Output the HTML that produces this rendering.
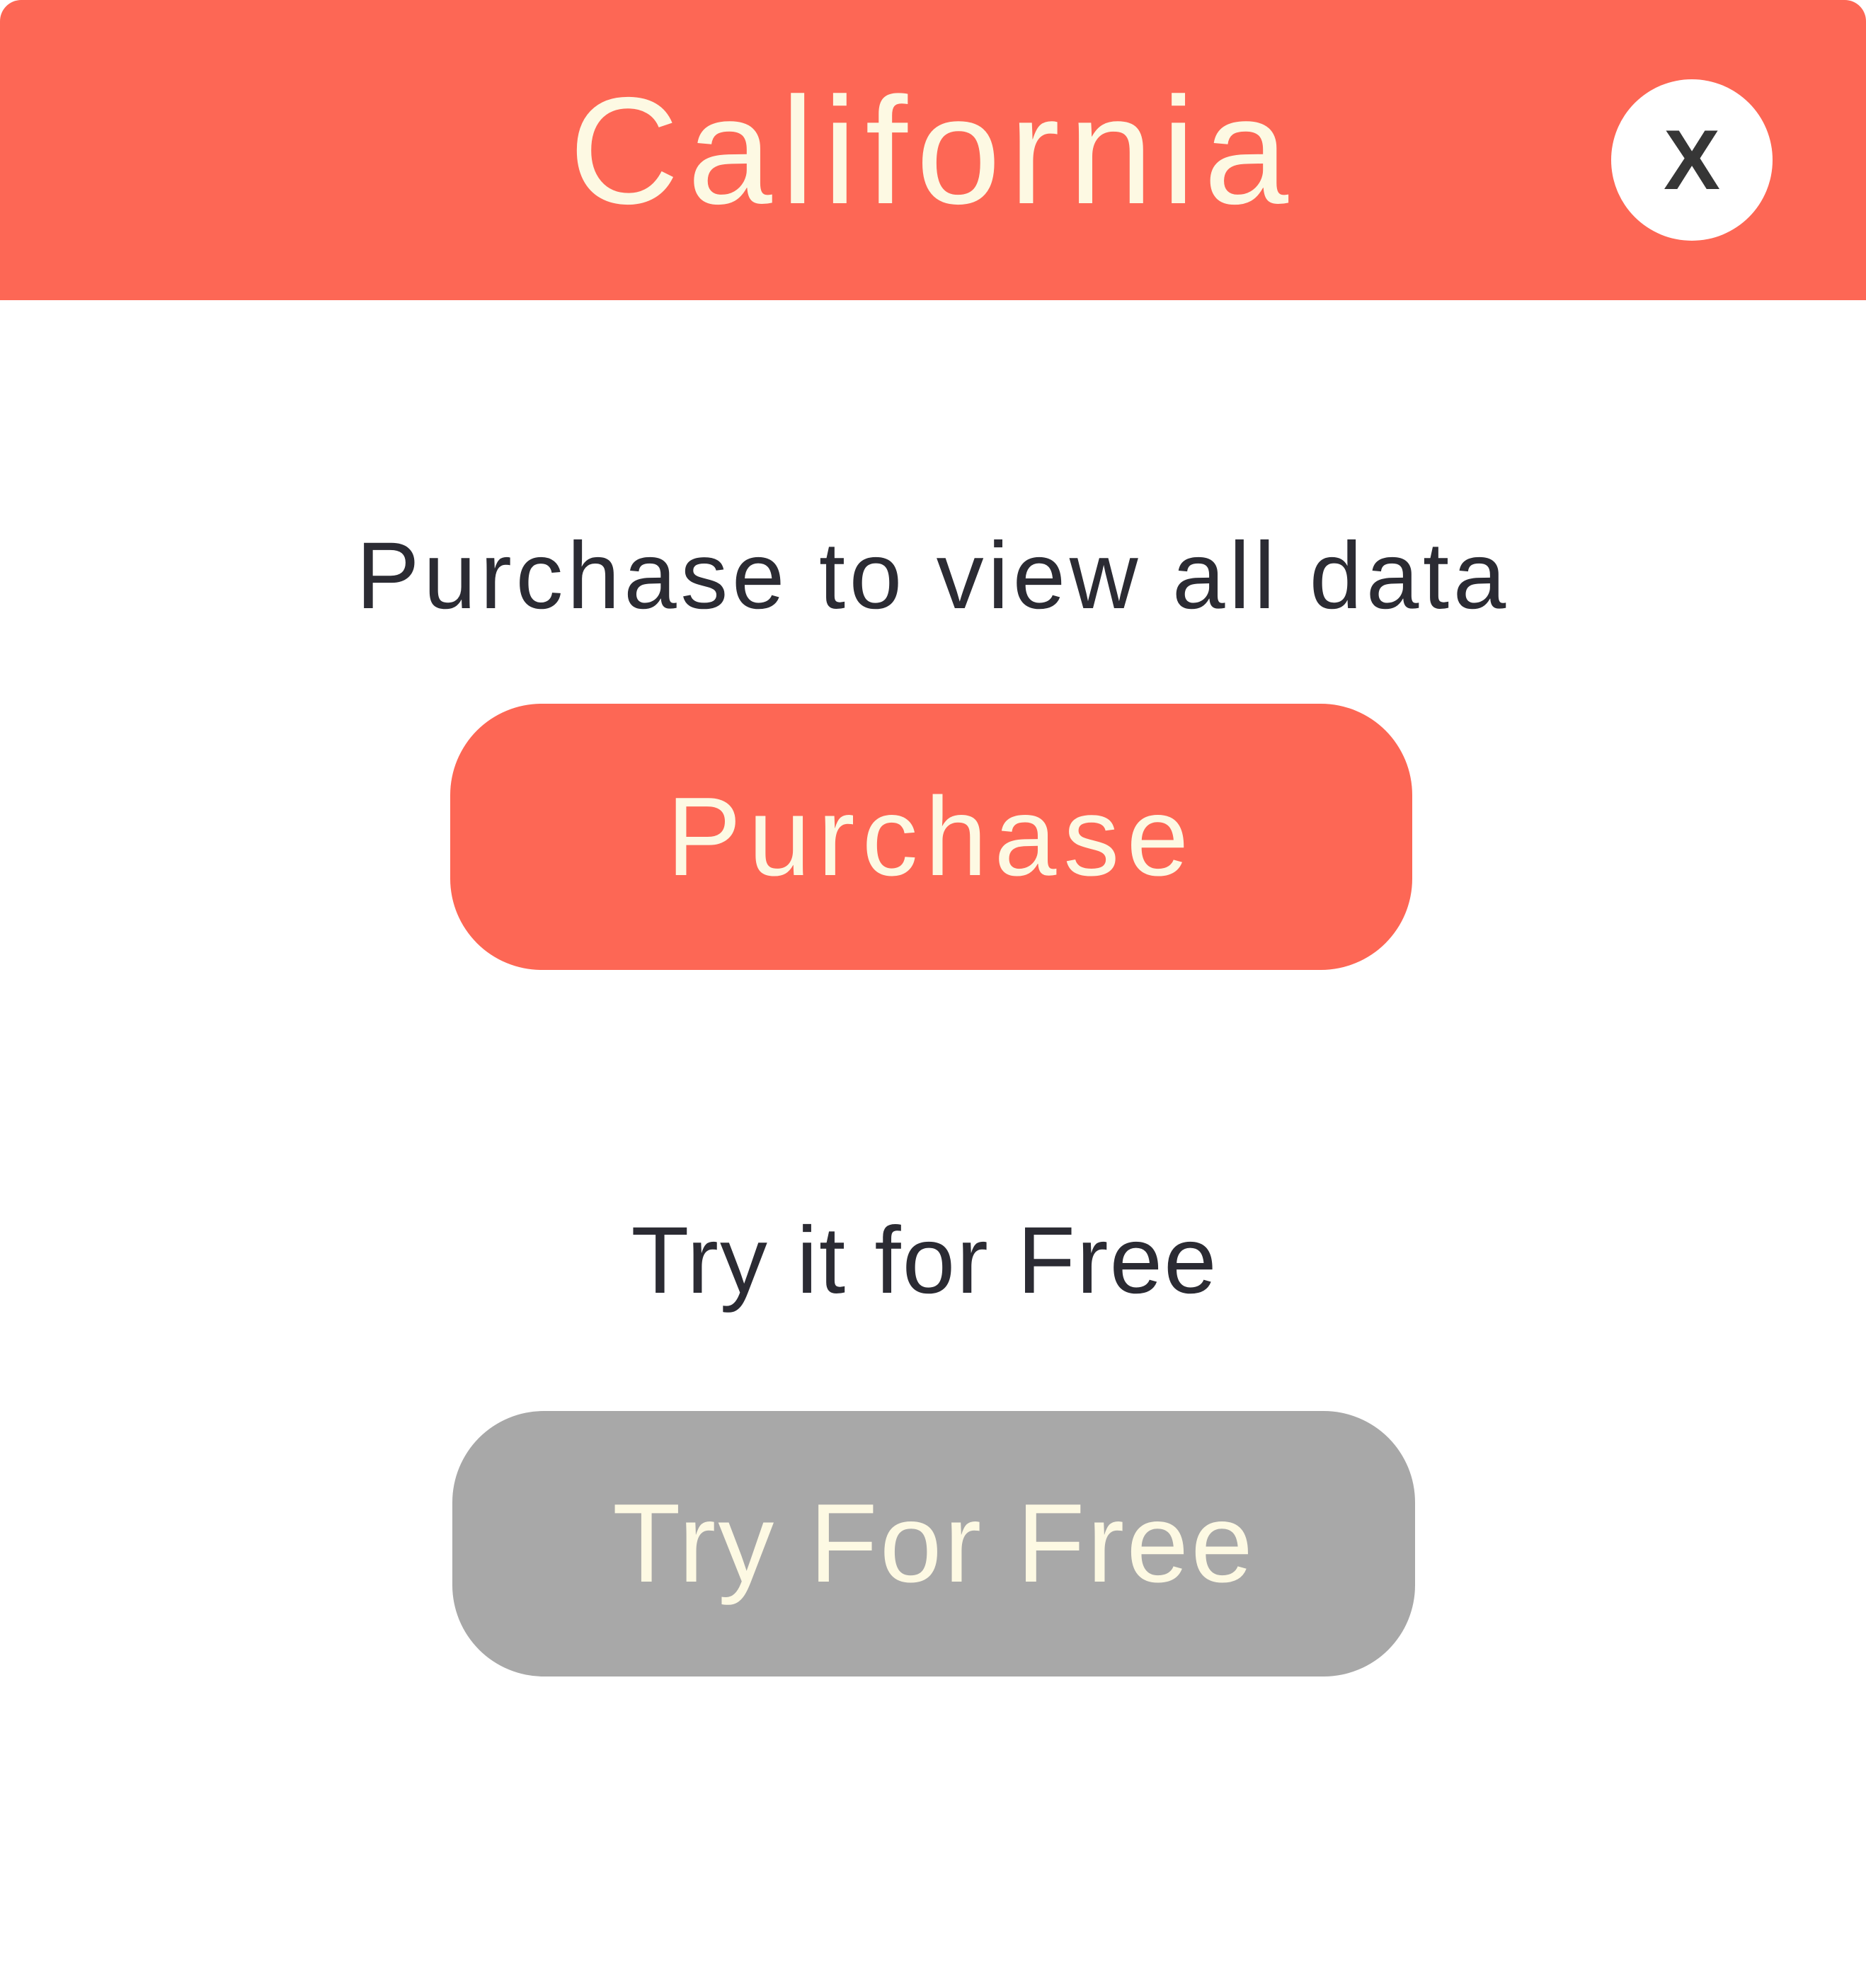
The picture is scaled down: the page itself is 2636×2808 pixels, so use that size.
<!DOCTYPE html>
<html><head><style>
html,body{margin:0;padding:0;background:#fff;}
body{width:2636px;height:2808px;position:relative;overflow:hidden;font-family:"Liberation Sans",sans-serif;}
.hdr{position:absolute;left:0;top:0;width:2636px;height:424px;background:#fd6755;border-radius:30px 30px 0 0;}
.title{position:absolute;left:0;width:2636px;text-align:center;top:105px;font-size:215px;line-height:215px;color:#fdf9e3;letter-spacing:12px;}
.close{position:absolute;left:2276px;top:112px;width:228px;height:228px;border-radius:50%;background:#fff;text-align:center;font-weight:bold;font-size:120px;line-height:228px;color:#363636;}
.t{position:absolute;left:0;width:2636px;text-align:center;color:#2b2b33;font-size:134px;line-height:134px;}
.btn{position:absolute;border-radius:129px;text-align:center;color:#fdf9e3;font-size:158px;}
</style></head><body>
<div class="hdr"></div>
<div class="title">California</div>
<div class="close">X</div>
<div class="t" style="top:747px;letter-spacing:5.6px;">Purchase to view all data</div>
<div class="btn" style="left:636px;top:994px;width:1359px;height:376px;line-height:376px;background:#fd6755;letter-spacing:10px;">Purchase</div>
<div class="t" style="top:1714px;left:-12px;letter-spacing:2px;">Try it for Free</div>
<div class="btn" style="left:639px;top:1993px;width:1360px;height:375px;line-height:375px;background:#a8a8a8;letter-spacing:3px;">Try For Free</div>
</body></html>
